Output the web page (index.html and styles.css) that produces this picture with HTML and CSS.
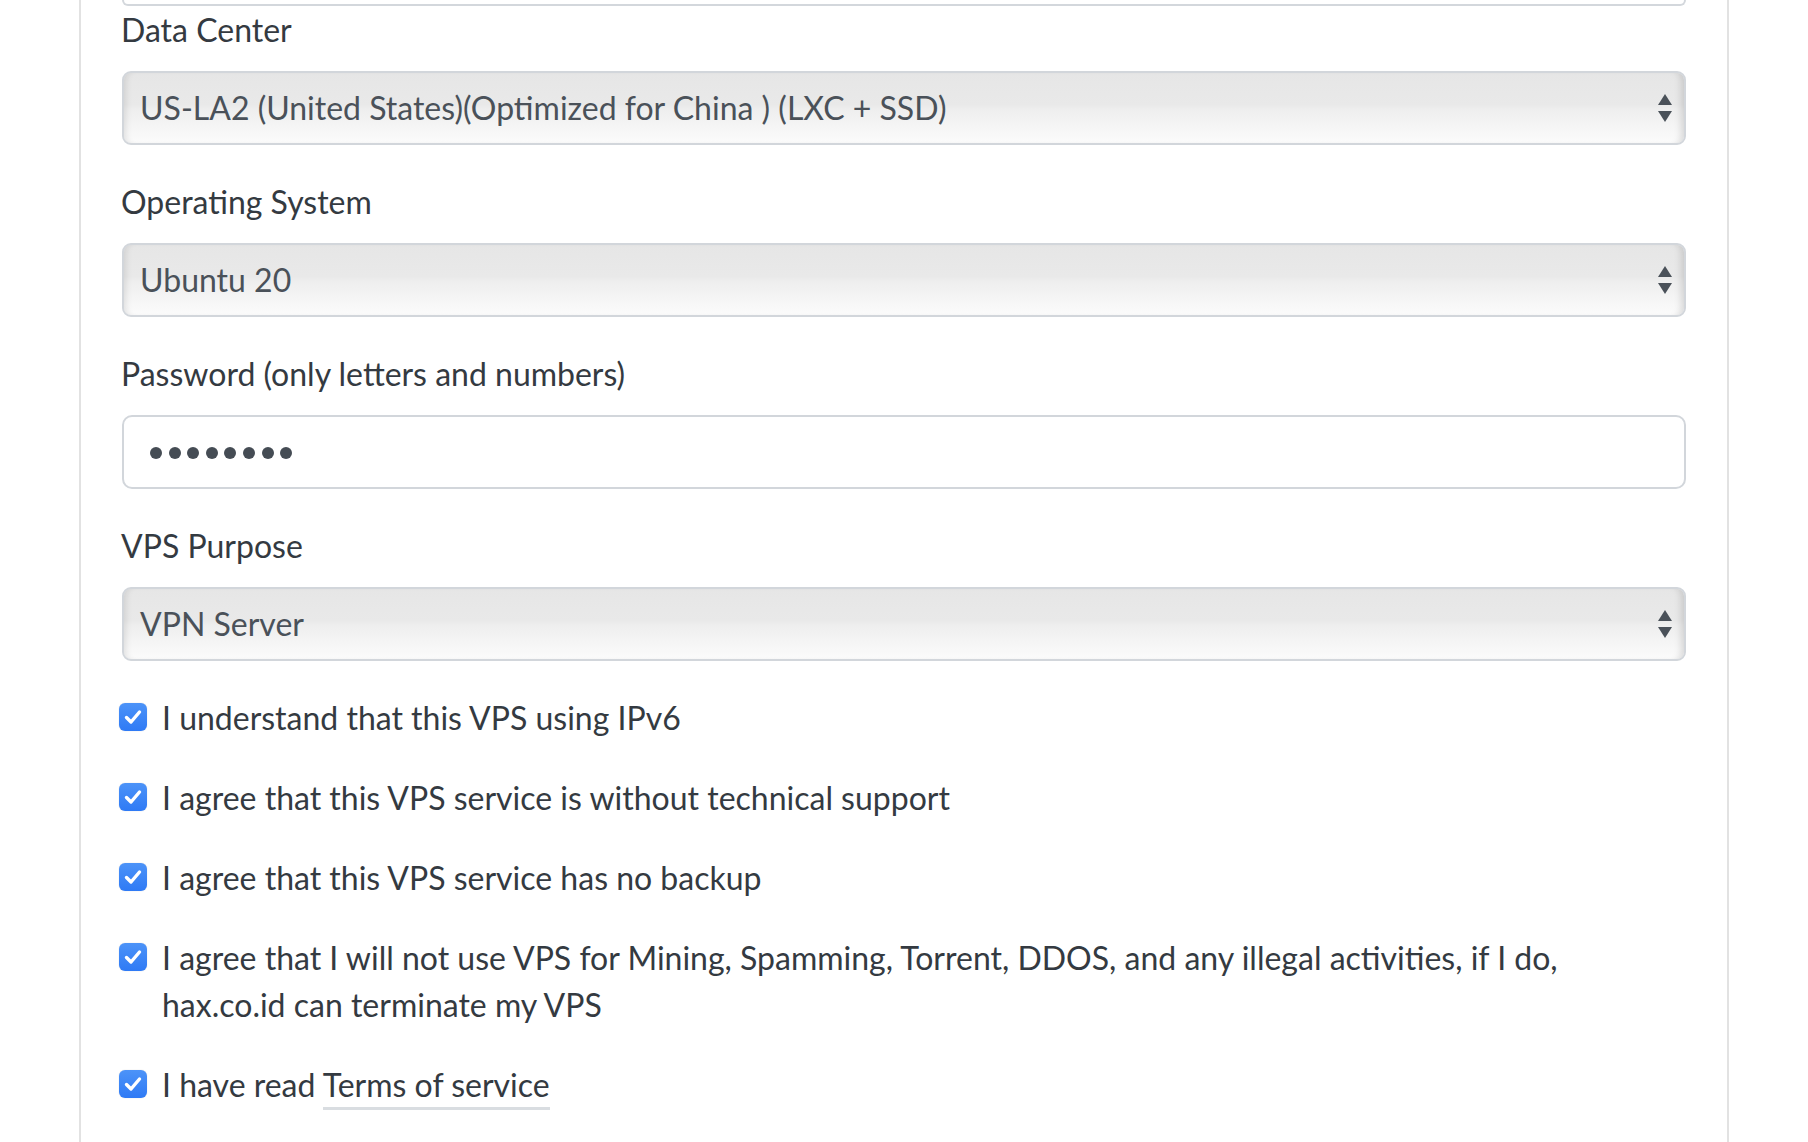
FILE: index.html
```html
<!DOCTYPE html>
<html>
<head>
<meta charset="utf-8">
<link rel="stylesheet" href="styles.css">
</head>
<body>
<div class="card">
  <div class="prev-field"></div>

  <div class="group">
    <label class="label">Data Center</label>
    <div class="select-wrap">
      <div class="select">US-LA2 (United States)(Optimized for China ) (LXC + SSD)</div>
      <svg class="arrows" width="14" height="28" viewBox="0 0 14 28"><path d="M7 0 L14 11 L0 11 Z" fill="#4a5159"/><path d="M0 17 L14 17 L7 28 Z" fill="#4a5159"/></svg>
    </div>
  </div>

  <div class="group">
    <label class="label">Operating System</label>
    <div class="select-wrap">
      <div class="select">Ubuntu 20</div>
      <svg class="arrows" width="14" height="28" viewBox="0 0 14 28"><path d="M7 0 L14 11 L0 11 Z" fill="#4a5159"/><path d="M0 17 L14 17 L7 28 Z" fill="#4a5159"/></svg>
    </div>
  </div>

  <div class="group">
    <label class="label">Password (only letters and numbers)</label>
    <div class="input">
      <span class="dot"></span><span class="dot"></span><span class="dot"></span><span class="dot"></span><span class="dot"></span><span class="dot"></span><span class="dot"></span><span class="dot"></span>
    </div>
  </div>

  <div class="group">
    <label class="label">VPS Purpose</label>
    <div class="select-wrap">
      <div class="select">VPN Server</div>
      <svg class="arrows" width="14" height="28" viewBox="0 0 14 28"><path d="M7 0 L14 11 L0 11 Z" fill="#4a5159"/><path d="M0 17 L14 17 L7 28 Z" fill="#4a5159"/></svg>
    </div>
  </div>

  <div class="checks">
    <div class="check">
      <span class="box"><svg width="28" height="28" viewBox="0 0 28 28"><path d="M7.5 14.5 L12 19 L20.5 9" fill="none" stroke="#fff" stroke-width="3.4" stroke-linecap="round" stroke-linejoin="round"/></svg></span>
      <span class="text">I understand that this VPS using IPv6</span>
    </div>
    <div class="check">
      <span class="box"><svg width="28" height="28" viewBox="0 0 28 28"><path d="M7.5 14.5 L12 19 L20.5 9" fill="none" stroke="#fff" stroke-width="3.4" stroke-linecap="round" stroke-linejoin="round"/></svg></span>
      <span class="text">I agree that this VPS service is without technical support</span>
    </div>
    <div class="check">
      <span class="box"><svg width="28" height="28" viewBox="0 0 28 28"><path d="M7.5 14.5 L12 19 L20.5 9" fill="none" stroke="#fff" stroke-width="3.4" stroke-linecap="round" stroke-linejoin="round"/></svg></span>
      <span class="text">I agree that this VPS service has no backup</span>
    </div>
    <div class="check">
      <span class="box"><svg width="28" height="28" viewBox="0 0 28 28"><path d="M7.5 14.5 L12 19 L20.5 9" fill="none" stroke="#fff" stroke-width="3.4" stroke-linecap="round" stroke-linejoin="round"/></svg></span>
      <span class="text">I agree that I will not use VPS for Mining, Spamming, Torrent, DDOS, and any illegal activities, if I do,<br>hax.co.id can terminate my VPS</span>
    </div>
    <div class="check">
      <span class="box"><svg width="28" height="28" viewBox="0 0 28 28"><path d="M7.5 14.5 L12 19 L20.5 9" fill="none" stroke="#fff" stroke-width="3.4" stroke-linecap="round" stroke-linejoin="round"/></svg></span>
      <span class="text">I have read <a class="link" href="#">Terms of service</a></span>
    </div>
  </div>
</div>
</body>
</html>
```

FILE: styles.css
```css
html, body {
  margin: 0;
  padding: 0;
  background: #ffffff;
}

body {
  font-family: Lato, "Open Sans", sans-serif;
  color: #343a41;
  height: 1142px;
  overflow: hidden;
}

.card {
  margin-left: 79px;
  width: 1566px;
  border-left: 2px solid #e2e2e2;
  border-right: 2px solid #e2e2e2;
  padding: 0 40px;
  box-sizing: content-box;
  min-height: 1142px;
}

.prev-field {
  height: 4px;
  border: 2px solid #d3d7dc;
  border-top: none;
  border-radius: 0 0 10px 10px;
  width: 1560px;
  margin-left: 1px;
}

.group {
  padding-top: 4px;
}

.group + .group {
  padding-top: 37px;
}

.label {
  display: block;
  font-size: 32px;
  line-height: 40px;
  height: 40px;
  margin-bottom: 21px;
  color: #343a41;
}

.select-wrap {
  position: relative;
  width: 1564px;
  margin-left: 1px;
}

.select {
  box-sizing: border-box;
  height: 74px;
  border: 2px solid #d2d6db;
  border-radius: 9px;
  padding: 0 16px;
  font-size: 32px;
  line-height: 70px;
  color: #4a5159;
  background: linear-gradient(to bottom, #e6e6e6 0%, #e9e9e9 45%, #eeeeee 52%, #f6f6f6 80%, #fbfbfb 100%);
  box-shadow: inset 7px 0 6px -5px rgba(0, 0, 0, 0.10), inset -8px 0 7px -5px rgba(0, 0, 0, 0.13);
  white-space: nowrap;
}

.arrows {
  position: absolute;
  right: 14px;
  top: 23px;
}

.input {
  box-sizing: border-box;
  height: 74px;
  width: 1564px;
  margin-left: 1px;
  border: 2px solid #d2d6db;
  border-radius: 10px;
  background: #ffffff;
  display: flex;
  align-items: center;
  padding-left: 26px;
  gap: 6.6px;
}

.dot {
  width: 12px;
  height: 12px;
  border-radius: 50%;
  background: #454c54;
  margin-top: 2px;
}

.checks {
  margin-left: -2px;
}

.check {
  display: flex;
  align-items: flex-start;
  margin-top: 33px;
}

.check:first-child {
  margin-top: 33px;
}

.box {
  flex: none;
  width: 28px;
  height: 28px;
  border-radius: 6px;
  background: linear-gradient(to bottom, #4c93f8, #2f7af5);
  box-shadow: 0 0 1px rgba(0, 0, 0, 0.25);
  margin-top: 9px;
  margin-right: 15px;
  display: flex;
}

.text {
  font-size: 32px;
  line-height: 47px;
  color: #343a41;
}

.link {
  color: #343a41;
  text-decoration: none;
  padding-bottom: 3px;
  border-bottom: 3px solid #d9dde1;
}
```
